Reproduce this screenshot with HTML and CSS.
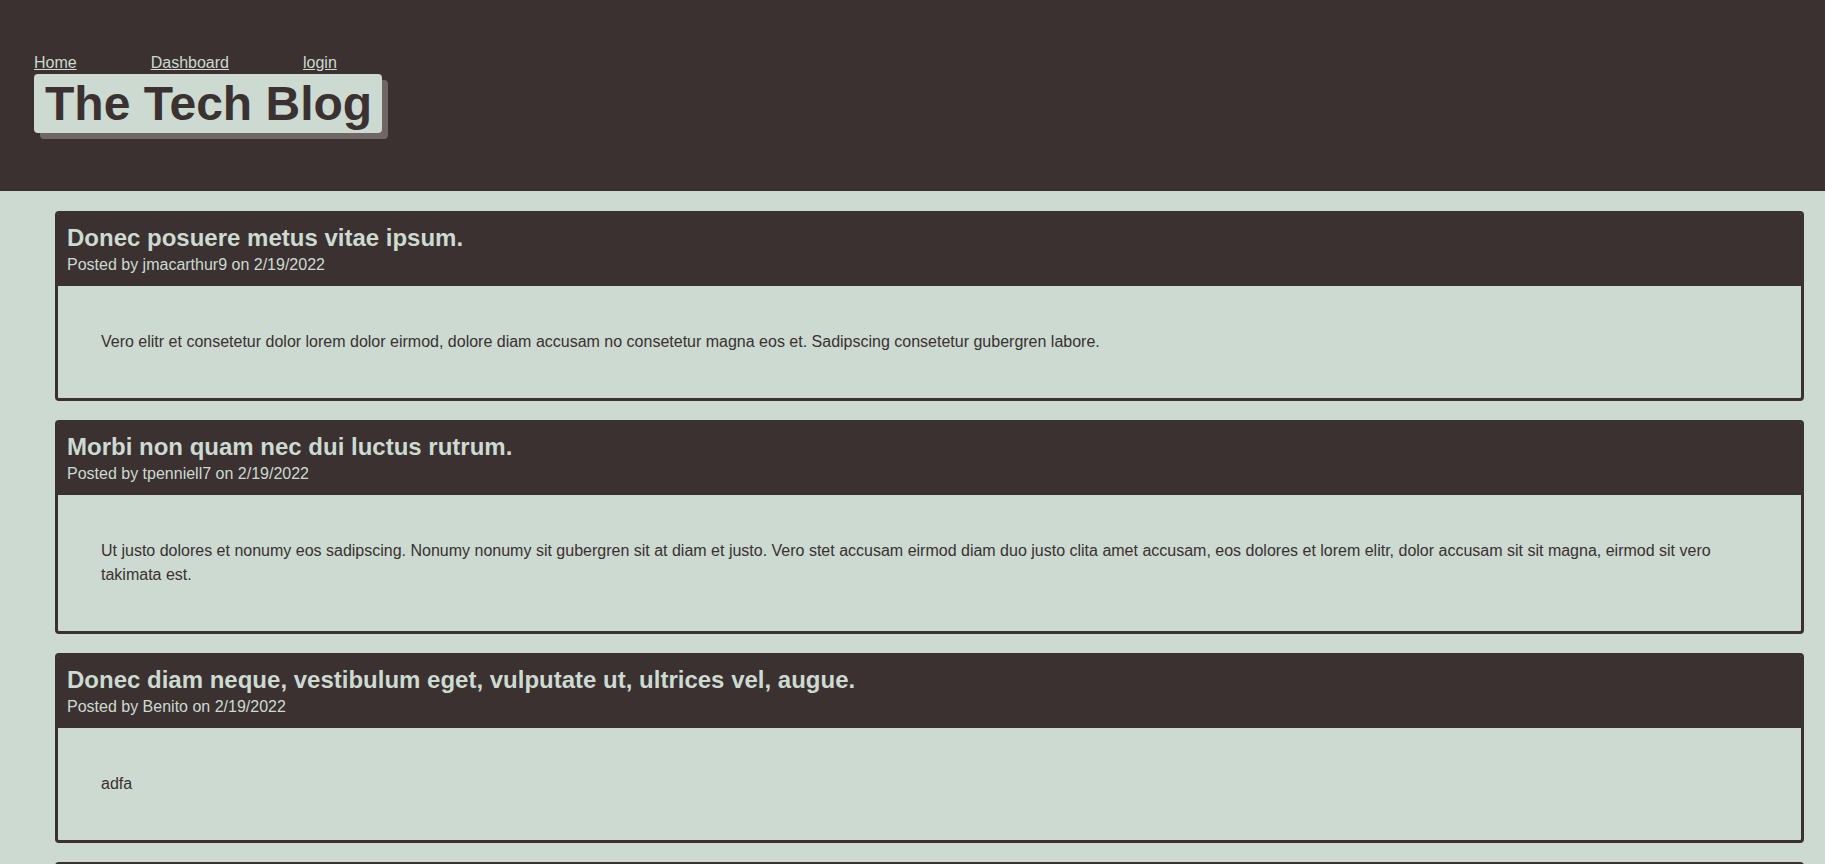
FILE: index.html
```html
<!DOCTYPE html>
<html lang="en">
<head>
<meta charset="utf-8">
<title>The Tech Blog</title>
<link rel="stylesheet" href="styles.css">
</head>
<body>
<header class="site-header">
  <nav class="nav">
    <a href="#">Home</a>
    <a href="#">Dashboard</a>
    <a href="#">login</a>
  </nav>
  <h1 class="brand">The Tech Blog</h1>
</header>
<main class="posts">
  <article class="post">
    <div class="post-head">
      <h2 class="post-title">Donec posuere metus vitae ipsum.</h2>
      <p class="post-meta">Posted by jmacarthur9 on 2/19/2022</p>
    </div>
    <div class="post-body">
      <p>Vero elitr et consetetur dolor lorem dolor eirmod, dolore diam accusam no consetetur magna eos et. Sadipscing consetetur gubergren labore.</p>
    </div>
  </article>
  <article class="post">
    <div class="post-head">
      <h2 class="post-title">Morbi non quam nec dui luctus rutrum.</h2>
      <p class="post-meta">Posted by tpenniell7 on 2/19/2022</p>
    </div>
    <div class="post-body">
      <p>Ut justo dolores et nonumy eos sadipscing. Nonumy nonumy sit gubergren sit at diam et justo. Vero stet accusam eirmod diam duo justo clita amet accusam, eos dolores et lorem elitr, dolor accusam sit sit magna, eirmod sit vero takimata est.</p>
    </div>
  </article>
  <article class="post">
    <div class="post-head">
      <h2 class="post-title">Donec diam neque, vestibulum eget, vulputate ut, ultrices vel, augue.</h2>
      <p class="post-meta">Posted by Benito on 2/19/2022</p>
    </div>
    <div class="post-body">
      <p>adfa</p>
    </div>
  </article>
  <article class="post">
    <div class="post-head">
      <h2 class="post-title">Nulla tellus.</h2>
      <p class="post-meta">Posted by Benito on 2/19/2022</p>
    </div>
    <div class="post-body">
      <p>Lorem ipsum dolor sit amet.</p>
    </div>
  </article>
</main>
</body>
</html>
```
FILE: styles.css
```css
* { box-sizing: border-box; }

html, body {
  margin: 0;
  padding: 0;
}

body {
  background: #ccdad1;
  font-family: "Liberation Sans", Arial, sans-serif;
  font-size: 16px;
  color: #3a3130;
}

.site-header {
  background: #3a3130;
  height: 191px;
  padding: 54px 34px 0;
}

.nav {
  display: flex;
  gap: 74px;
  line-height: 18px;
}

.nav a {
  color: #ccdad1;
  text-decoration: underline;
}

.brand {
  display: inline-block;
  margin: 2px 0 0;
  padding: 2px 10px 2px 11px;
  font-size: 48px;
  line-height: 55px;
  font-weight: bold;
  color: #3a3130;
  background: #ccdad1;
  border-radius: 4px;
  box-shadow: 6px 6px 0 #6e6765;
}

.posts {
  display: flex;
  flex-direction: column;
  gap: 19px;
  padding: 20px 21px 20px 55px;
}

.post {
  border: 3px solid #3a3130;
  border-radius: 4px;
  overflow: hidden;
}

.post-head {
  background: #3a3130;
  color: #ccdad1;
  padding: 10px 9px 11px;
}

.post-title {
  margin: 0;
  font-size: 24px;
  line-height: 28px;
  font-weight: bold;
}

.post-meta {
  margin: 2px 0 0;
  font-size: 16px;
  line-height: 21px;
}

.post-body {
  padding: 34px 43px;
}

.post-body p {
  margin: 10px 0;
  line-height: 24px;
}
```
